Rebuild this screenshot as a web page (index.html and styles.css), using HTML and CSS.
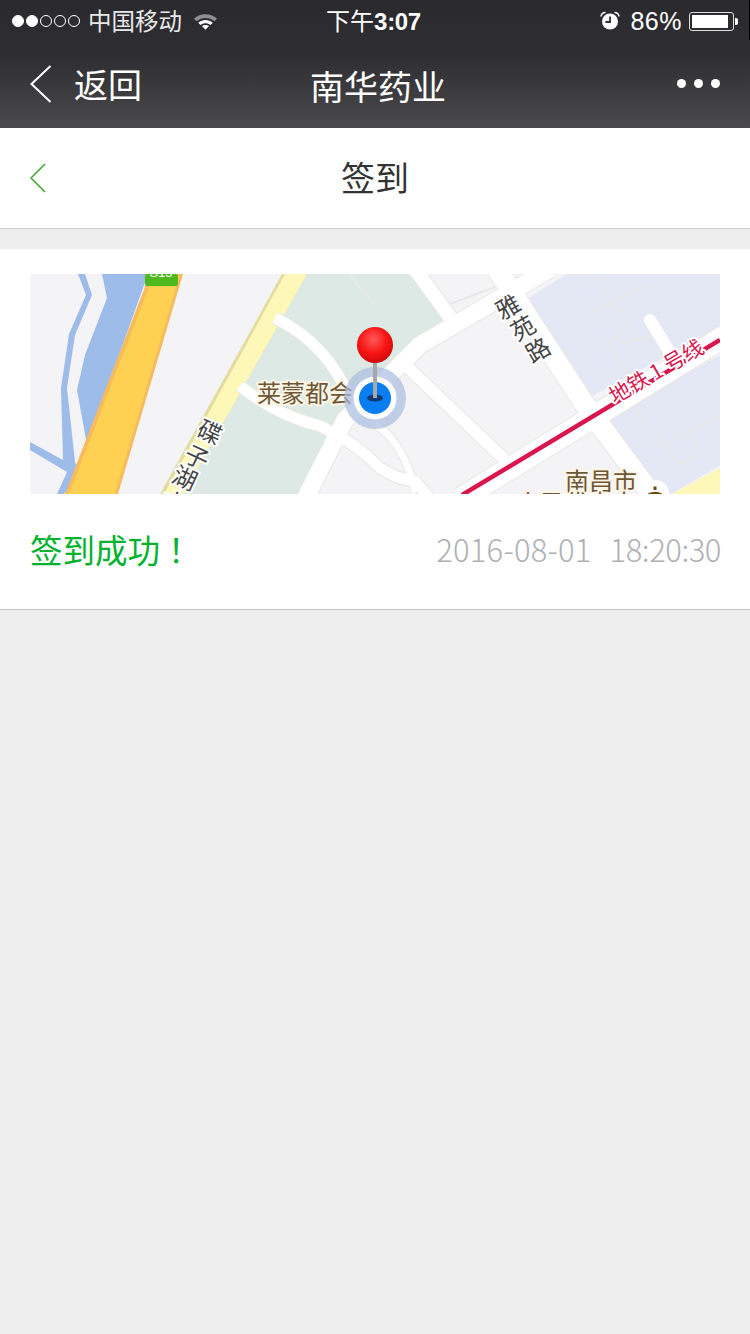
FILE: index.html
```html
<!DOCTYPE html>
<html lang="zh">
<head>
<meta charset="utf-8">
<title>签到</title>
<link rel="stylesheet" href="styles.css">
</head>
<body>
<header class="chrome">
  <div class="status">
    <div class="status-left">
      <span class="dot on"></span><span class="dot on"></span><span class="dot"></span><span class="dot"></span><span class="dot"></span>
      <span class="carrier">中国移动</span>
      <svg class="wifi" width="25" height="18" viewBox="0 0 26 18"><path d="M1 6.500C8 .3 18 .3 25 6.500L22.500 9.300C16.800 4.600 9.200 4.600 3.500 9.300Z" fill="#8f8f91"/><path d="M5.500 10.700C10 7 16 7 20.500 10.700L18.200 13.200C15 10.700 11 10.700 7.800 13.200Z" fill="#fff"/><path d="M9.300 14.300C11.500 12.800 14.500 12.800 16.700 14.300L13 18Z" fill="#fff"/></svg>
    </div>
    <div class="clock">下午<b>3:07</b></div>
    <div class="status-right">
      <svg class="alarm" width="20" height="20" viewBox="0 0 20 20"><circle cx="10" cy="10.500" r="8" fill="#fff"/><path d="M10 5.500V11H5.500" fill="none" stroke="#2c2c30" stroke-width="1.800"/><path d="M1 5.500C1.300 3 3 1.500 5.500 1.500M19 5.500C18.700 3 17 1.500 14.500 1.500" fill="none" stroke="#fff" stroke-width="1.600"/></svg>
      <span class="pct">86%</span>
      <span class="battery"><span class="battery-fill"></span></span><span class="battery-tip"></span>
    </div>
  </div>
  <nav class="nav">
    <div class="nav-back">
      <svg width="22" height="38" viewBox="0 0 22 38"><path d="M20.500 1L1.500 19L20.500 37" fill="none" stroke="#fff" stroke-width="2"/></svg>
      <span class="nav-back-label">返回</span>
    </div>
    <div class="nav-title">南华药业</div>
    <div class="nav-more"><i></i><i></i><i></i></div>
  </nav>
</header>

<section class="subbar">
  <svg class="sub-back" width="16" height="30" viewBox="0 0 16 30"><path d="M15 1L1 15L15 29" fill="none" stroke="#3aa52a" stroke-width="1.500"/></svg>
  <h1 class="sub-title">签到</h1>
</section>

<main class="card">
  <svg class="map" width="690" height="220" viewBox="0 0 690 220">
    <rect class="m-ground" width="690" height="220"/>
    <path class="m-park" d="M277 0H382L420 46L357 98L315 146L273 220H150Z"/>
    <path class="m-lilac" d="M537 0H690V54L558 124L492 28ZM573 146L690 81V191L642 220H625Z"/>
    <path class="m-yellow-soft" d="M642 220L690 194V220Z"/>

    <path class="m-thin" d="M560 0L600 50L580 70L610 120M620 10L560 40M500 0L420 30M640 170L690 140M600 130L650 190L670 180L660 160M590 70L625 60L650 110M320 0L330 15L345 30"/>

    <path class="m-river" d="M72 0H118L57 171L47 116L55 81L77 24Z"/>
    <path class="m-river" d="M48 0H55L62 21L45 61L37 114L45 188L50 200L34 220H27L37 198L0 176V168L33 186L31 114L39 60L56 21Z"/>
    <path class="m-road-orange" d="M120 0H153L88 220H35Z"/>
    <path class="m-road-fill" d="M124 0H150L85 220H39Z"/>
    <rect class="m-shield" x="115" y="0" width="33" height="12" rx="2"/>
    <text class="m-shield-text" x="131" y="3" text-anchor="middle">S15</text>
    <path class="m-yellow-edge" d="M252 0H277L153 220H130Z"/>
    <path class="m-yellow" d="M255 0H277L153 220H134Z"/>

    <g class="m-edges">
      <path class="r-main" d="M520 -5L390 71L315 146L275 225"/>
      <path class="r-ya" d="M467 -5L553 128L625 225"/>
      <path class="r-top" d="M385 -5L425 50"/>
      <path class="r-mid" d="M370 86L475 186"/>
      <path class="r-side" d="M245 44Q298 70 320 125"/>
      <path class="r-side" d="M210 112Q248 142 290 152Q325 168 350 194Q368 206 385 207L400 225"/>
      <path class="r-thin" d="M345 150Q375 170 385 218"/>
      <path class="r-metro" d="M695 62L430 225"/>
    </g>
    <g class="m-roads">
      <path class="r-main" d="M520 -5L390 71L315 146L275 225"/>
      <path class="r-ya" d="M467 -5L553 128L625 225"/>
      <path class="r-top" d="M385 -5L425 50"/>
      <path class="r-mid" d="M370 86L475 186"/>
      <path class="r-side" d="M245 44Q298 70 320 125"/>
      <path class="r-side" d="M210 112Q248 142 290 152Q325 168 350 194Q368 206 385 207L400 225"/>
      <path class="r-thin" d="M345 150Q375 170 385 218"/>
      <path class="r-metro" d="M695 62L430 225"/>
      <path class="r-cap" d="M620 46L642 82"/>
    </g>
    <path class="m-metro" d="M690 66L432 221"/>

    <text class="m-label m-poi" x="227" y="128">莱蒙都会</text>
    <g class="m-label m-street">
      <text transform="translate(478 33) rotate(-30)" x="0" y="9" text-anchor="middle">雅</text>
      <text transform="translate(493 54) rotate(-30)" x="0" y="9" text-anchor="middle">苑</text>
      <text transform="translate(508 76) rotate(-30)" x="0" y="9" text-anchor="middle">路</text>
      <text transform="translate(180 158) rotate(25)" x="0" y="9" text-anchor="middle">碟</text>
      <text transform="translate(167 183) rotate(25)" x="0" y="9" text-anchor="middle">子</text>
      <text transform="translate(155 204) rotate(25)" x="0" y="9" text-anchor="middle">湖</text>
      <text transform="translate(143 228) rotate(25)" x="0" y="9" text-anchor="middle">大</text>
    </g>
    <text class="m-label m-line" transform="translate(630 104) rotate(-30)" text-anchor="middle">地铁 1 号线</text>
    <text class="m-label m-poi" x="535" y="216">南昌市</text>
    <text class="m-label m-poi" x="486" y="238">人民代表大</text>
    <circle class="m-badge" cx="625" cy="220" r="14"/>
    <path class="m-badge-icon" d="M618 219.500Q625 216 632 219.500V220H618ZM623.500 216V212.500H626.500V216Z"/>

    <circle class="m-halo" cx="345" cy="124" r="31"/>
    <circle class="m-ring" cx="345" cy="124" r="21.500"/>
    <circle class="m-locate" cx="345" cy="124" r="16"/>
    <ellipse class="m-shadow" cx="345" cy="124" rx="8" ry="3.500"/>
    <rect class="m-pin" x="343" y="85" width="4" height="39"/>
    <defs>
      <radialGradient id="ball" cx="0.45" cy="0.35" r="0.7">
        <stop offset="0" stop-color="#ff5a5a"/>
        <stop offset="0.55" stop-color="#f81414"/>
        <stop offset="1" stop-color="#c80808"/>
      </radialGradient>
    </defs>
    <circle cx="345" cy="71" r="18" fill="url(#ball)"/>
  </svg>
  <div class="result">
    <span class="result-ok">签到成功<span class="result-bang">！</span></span>
    <span class="result-time"><span class="result-date">2016-08-01</span><span class="result-clock">18:20:30</span></span>
  </div>
</main>
</body>
</html>
```
FILE: styles.css
```css
* { box-sizing: border-box; }
html, body { margin: 0; padding: 0; }
body {
  width: 750px;
  height: 1334px;
  overflow: hidden;
  background: #eeeeee;
  font-family: "Noto Sans CJK SC", "Liberation Sans", sans-serif;
}
.chrome {
  height: 128px;
  background: linear-gradient(#2a292e 0, #2f2f33 45%, #4a4a4c 100%);
  color: #fff;
}
.status {
  height: 40px;
  display: grid;
  grid-template-columns: 1fr auto 1fr;
  align-items: center;
  padding: 0 11px 0 12px;
  border-right: 1px solid #000;
}
.status-left, .status-right { display: flex; align-items: center; }
.status-right { justify-content: flex-end; }
.dot {
  width: 12px;
  height: 12px;
  margin-right: 2px;
  border: 1px solid #fff;
  border-radius: 50%;
}
.dot.on { background: #fff; }
.carrier { margin-left: 6px; padding-bottom: 2px; font-size: 23.500px; line-height: 38px; color: #e8e8e8; }
.wifi { margin-left: 11px; }
.clock { margin-right: 3px; font-size: 24px; line-height: 40px; }
.clock b { font-family: "Liberation Sans", sans-serif; font-weight: 700; font-size: 24px; letter-spacing: -0.300px; }
.alarm { margin-right: 10px; }
.pct { font-family: "Liberation Sans", sans-serif; font-size: 25px; letter-spacing: 0.500px; margin-right: 7px; }
.battery {
  display: block;
  width: 45px;
  height: 19px;
  padding: 2px;
  border: 1px solid #ddd;
  border-radius: 3px;
}
.battery-fill { display: block; width: 36px; height: 100%; background: #fff; }
.battery-tip { width: 3px; height: 7px; margin-left: 1px; background: #fff; border-radius: 0 2px 2px 0; }
.nav {
  height: 88px;
  display: grid;
  grid-template-columns: 1fr auto 1fr;
  align-items: center;
  padding: 0 30px;
}
.nav-back { display: flex; align-items: center; font-size: 34px; gap: 22px; }
.nav-back-label { padding-bottom: 2px; }
.nav-title { margin-left: 6px; padding-top: 2px; font-size: 34px; }
.nav-more { display: flex; justify-content: flex-end; gap: 8px; padding-bottom: 2px; }
.nav-more i { width: 9px; height: 9px; border-radius: 50%; background: #fff; }
.subbar {
  height: 101px;
  padding: 0 30px;
  display: flex;
  align-items: center;
  background: #fff;
  border-bottom: 1px solid #cfcfcf;
}
.sub-title {
  flex: 1;
  margin: 0 0 0 -16px;
  padding-bottom: 3px;
  text-align: center;
  font-size: 34px;
  font-weight: 400;
  color: #333;
}
.card {
  margin-top: 20px;
  height: 361px;
  padding: 25px 29px 0 30px;
  background: #fff;
  border-bottom: 1px solid #c4c4c4;
}
.map { display: block; }
.result {
  display: flex;
  justify-content: space-between;
  align-items: center;
  height: 108px;
}
.result-ok { font-size: 32.500px; color: #00b22d; }
.result-bang { padding-left: 8px; }
.result-time { display: flex; gap: 18px; font-size: 31px; font-weight: 300; color: #aeb0b4; }
.result-date { letter-spacing: 0.200px; }
.result-clock { letter-spacing: -0.450px; }
.m-ground { fill: #f4f4f7; }
.m-park { fill: #dce9e4; }
.m-lilac { fill: #e4e8f4; }
.m-yellow-soft { fill: #fdf7b8; }
.m-thin { fill: none; stroke: #e8e8e8; stroke-width: 2; }
.m-river { fill: #9dbce9; }
.m-road-orange { fill: #f7bb5e; }
.m-road-fill { fill: #ffd152; }
.m-shield { fill: #4fb81f; }
.m-shield-text { font-size: 13px; fill: #fff; font-family: "Liberation Sans", sans-serif; }
.m-yellow-edge { fill: #e3dca0; }
.m-yellow { fill: #fdf7b8; }
.m-edges path { fill: none; stroke: #e9e7e0; }
.m-roads path { fill: none; stroke: #fff; }
.m-edges .r-main { stroke-width: 19px; }
.m-roads .r-main { stroke-width: 17px; }
.m-edges .r-ya { stroke-width: 22px; }
.m-roads .r-ya { stroke-width: 20px; }
.m-edges .r-top { stroke-width: 16px; }
.m-roads .r-top { stroke-width: 14px; }
.m-edges .r-mid { stroke-width: 14px; }
.m-roads .r-mid { stroke-width: 12px; }
.m-edges .r-side { stroke-width: 13px; }
.m-roads .r-side { stroke-width: 11px; }
.m-edges .r-thin { stroke-width: 9px; }
.m-roads .r-thin { stroke-width: 7px; }
.m-edges .r-metro { stroke-width: 24px; }
.m-roads .r-metro { stroke-width: 22px; }
.m-roads .r-cap { stroke-width: 12px; stroke-linecap: round; }
.m-metro { fill: none; stroke: #d9174e; stroke-width: 4.500px; }
.m-label { paint-order: stroke; stroke: #fff; stroke-width: 4px; stroke-linejoin: round; }
.m-poi { font-size: 24px; fill: #6f5638; stroke: #fdf6e6; }
.m-street { font-size: 24px; fill: #454545; stroke: #fff; }
.m-line { font-size: 21px; fill: #d9174e; }
.m-badge { fill: #fff; }
.m-badge-icon { fill: #6b4a12; }
.m-halo { fill: #a9bce0; opacity: 0.7; }
.m-ring { fill: #fff; }
.m-locate { fill: #0a7df0; }
.m-shadow { fill: #0b3a70; }
.m-pin { fill: #a8a8a8; }
```
